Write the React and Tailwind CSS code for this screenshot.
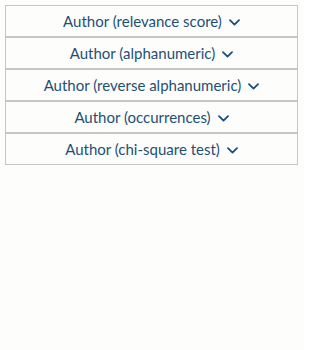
import React from "react";

const items = [
  "Author (relevance score)",
  "Author (alphanumeric)",
  "Author (reverse alphanumeric)",
  "Author (occurrences)",
  "Author (chi-square test)",
];

function Chevron() {
  return (
    <svg width="11" height="7" viewBox="0 0 11 7" className="ml-[7px] mt-[2px]" fill="none">
      <path d="M1 1.2 L5.5 5.6 L10 1.2" stroke="#1e5077" strokeWidth="1.8" strokeLinecap="round" strokeLinejoin="round" />
    </svg>
  );
}

export default function App() {
  return (
    <div className="w-[304px] h-[350px] bg-[#fdfdfb] pt-[5px] pl-[5px]" style={{ fontFamily: "Lato, 'Open Sans', sans-serif" }}>
      <div className="flex flex-col w-[293px]">
        {items.map((t) => (
          <button
            key={t}
            className="h-[32px] w-full border border-[#c3c7cb] bg-[#fdfdfb] flex items-center justify-center text-[15px] text-[#1e5077]"
          >
            <span>{t}</span>
            <Chevron />
          </button>
        ))}
      </div>
    </div>
  );
}
